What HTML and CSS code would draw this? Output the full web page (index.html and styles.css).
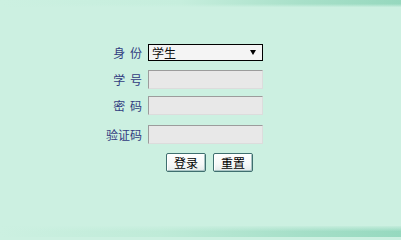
FILE: index.html
```html
<!DOCTYPE html>
<html lang="zh-CN">
<head>
<meta charset="utf-8">
<title>登录</title>
<link rel="stylesheet" href="styles.css">
</head>
<body>
<div class="page">
  <div class="band band-top"></div>
  <form class="login">
    <div class="row row-first">
      <label class="lbl">身 份</label>
      <div class="select-wrap">
        <select class="sel">
          <option>学生</option>
          <option>教师</option>
        </select>
        <span class="arrow"></span>
      </div>
    </div>
    <div class="row row-2">
      <label class="lbl">学 号</label>
      <input class="txt" type="text">
    </div>
    <div class="row row-3">
      <label class="lbl">密 码</label>
      <input class="txt" type="password">
    </div>
    <div class="row row-4">
      <label class="lbl">验证码</label>
      <input class="txt" type="text">
    </div>
    <div class="row row-btns">
      <span class="lbl"></span>
      <div class="btns">
        <button type="button" class="btn">登录</button>
        <button type="button" class="btn">重置</button>
      </div>
    </div>
  </form>
  <div class="spacer"></div>
  <div class="band band-bottom"></div>
</div>
</body>
</html>
```

FILE: styles.css
```css
html, body {
  margin: 0;
  padding: 0;
}
body {
  background: #ccf0e1;
  font-family: "Noto Sans CJK SC", "Noto Sans", sans-serif;
  font-size: 12px;
}
.page {
  width: 401px;
  height: 237px;
  display: flex;
  flex-direction: column;
  background: #ccf0e1;
  overflow: hidden;
}
.band {
  flex: none;
  width: 100%;
}
.band-top {
  height: 7px;
  background:
    linear-gradient(to bottom, rgba(204,240,225,0) 0%, rgba(204,240,225,0) 55%, rgba(204,240,225,0.9) 100%),
    linear-gradient(to right, #ccf0e1 0%, #c6eedd 45%, #a8e0c9 75%, #96d8be 100%);
}
.band-bottom {
  height: 11px;
  background:
    linear-gradient(to bottom, rgba(204,240,225,0.85) 0%, rgba(204,240,225,0) 50%, rgba(204,240,225,0) 100%),
    linear-gradient(to right, #ccf0e1 0%, #bfebd8 40%, #a5dfc8 75%, #96d9bf 100%);
}
.spacer {
  flex: 1;
}
.login {
  margin: 0;
  padding-left: 102px;
  display: flex;
  flex-direction: column;
}
.row {
  display: flex;
  align-items: center;
  gap: 6px;
}
.row-first { margin-top: 37px; }
.row-2 { margin-top: 9px; }
.row-3 { margin-top: 7px; }
.row-4 { margin-top: 10px; }
.row-btns { margin-top: 9px; }
.lbl {
  width: 40px;
  flex: none;
  text-align: right;
  color: #323c80;
  font-size: 12px;
  line-height: 14px;
  white-space: pre;
  word-spacing: 2px;
}
.select-wrap {
  position: relative;
  width: 115px;
  height: 17px;
}
.sel {
  appearance: none;
  -webkit-appearance: none;
  box-sizing: border-box;
  width: 115px;
  height: 17px;
  margin: 0;
  padding: 0 0 0 3px;
  border: 1px solid #000;
  border-radius: 0;
  background: #f4f4f4;
  color: #111;
  font-family: "Noto Sans CJK SC", "Noto Sans", sans-serif;
  font-size: 12px;
  line-height: 15px;
  outline: none;
}
.arrow {
  position: absolute;
  right: 7px;
  top: 6px;
  width: 0;
  height: 0;
  border-left: 3px solid transparent;
  border-right: 3px solid transparent;
  border-top: 5px solid #000;
  pointer-events: none;
}
.txt {
  box-sizing: border-box;
  width: 115px;
  height: 19px;
  margin: 0;
  padding: 0 2px;
  border-style: solid;
  border-width: 1px;
  border-color: #9c9c9c #dcdcdc #dcdcdc #9c9c9c;
  background: #e8e8e8;
  border-radius: 0;
  outline: none;
}
.btns {
  display: flex;
  gap: 7px;
  margin-left: 18px;
}
.btn {
  box-sizing: border-box;
  width: 40px;
  height: 19px;
  margin: 0;
  padding: 0;
  border: 1px solid #3f6f6f;
  border-radius: 2px;
  background: linear-gradient(to bottom, #ffffff 0%, #f6f8f8 60%, #e4eaea 100%);
  box-shadow: inset 1px 1px 0 #ffffff, inset -1px -1px 0 #a9c4c4;
  color: #000;
  font-family: "Noto Sans CJK SC", "Noto Sans", sans-serif;
  font-size: 12px;
  line-height: 16px;
}
```
